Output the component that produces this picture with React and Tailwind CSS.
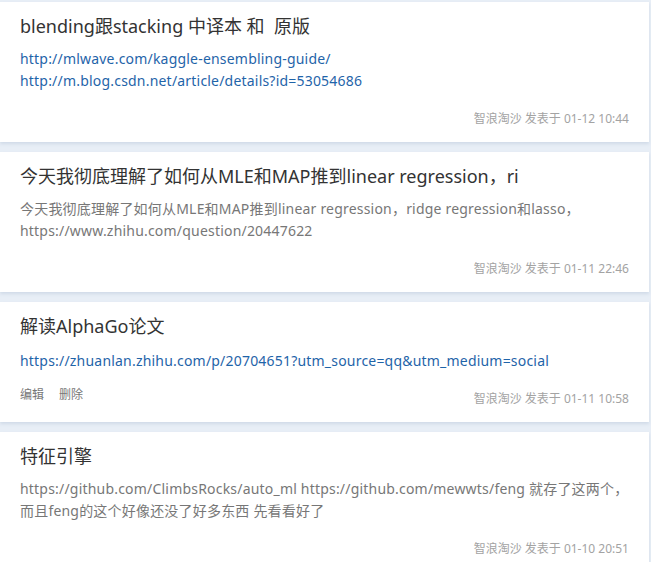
const posts = [
  {
    title: 'blending跟stacking 中译本 和\u00a0 原版',
    links: ['http://mlwave.com/kaggle-ensembling-guide/', 'http://m.blog.csdn.net/article/details?id=53054686'],
    time: '01-12 10:44',
  },
  {
    title: '今天我彻底理解了如何从MLE和MAP推到linear regression，ri',
    text: '今天我彻底理解了如何从MLE和MAP推到linear regression，ridge regression和lasso，https://www.zhihu.com/question/20447622',
    time: '01-11 22:46',
  },
  {
    title: '解读AlphaGo论文',
    links: ['https://zhuanlan.zhihu.com/p/20704651?utm_source=qq&utm_medium=social'],
    time: '01-11 10:58',
    own: true,
  },
  {
    title: '特征引擎',
    text: 'https://github.com/ClimbsRocks/auto_ml https://github.com/mewwts/feng 就存了这两个，而且feng的这个好像还没了好多东西 先看看好了',
    time: '01-10 20:51',
  },
];

function PostCard({ post }) {
  return (
    <div className="bg-white mr-[2px] pl-5 pr-5 pt-3 pb-[14px] shadow-[0_2px_3px_rgba(180,195,215,0.45)]">
      <h2 className="text-[18px] leading-6 text-[#333]">{post.title}</h2>
      <div className={(post.own ? 'mt-3' : 'mt-[10px]') + ' text-[14px] leading-[22px] tracking-[0.2px]'}>
        {post.links &&
          post.links.map((l) => (
            <a key={l} href="#" className="block text-[#1f64a9]">
              {l}
            </a>
          ))}
        {post.text && <p className="mt-[3px] text-[#777]">{post.text}</p>}
      </div>
      <div className="flex items-end justify-between mt-[18px] text-[12px] leading-[18px]">
        <div className="flex gap-[15px] text-[#777] -translate-y-[4px]">
          {post.own && (
            <>
              <span>编辑</span>
              <span>删除</span>
            </>
          )}
        </div>
        <span className="text-[#a3a3a3]">智浪淘沙 发表于 {post.time}</span>
      </div>
    </div>
  );
}

export default function App() {
  return (
    <div
      className="min-h-[562px] bg-[#e8eef6] pt-[2px] flex flex-col gap-[10px]"
      style={{ fontFamily: '"Noto Sans", "Noto Sans CJK SC", sans-serif' }}
    >
      {posts.map((p) => (
        <PostCard key={p.time} post={p} />
      ))}
    </div>
  );
}
